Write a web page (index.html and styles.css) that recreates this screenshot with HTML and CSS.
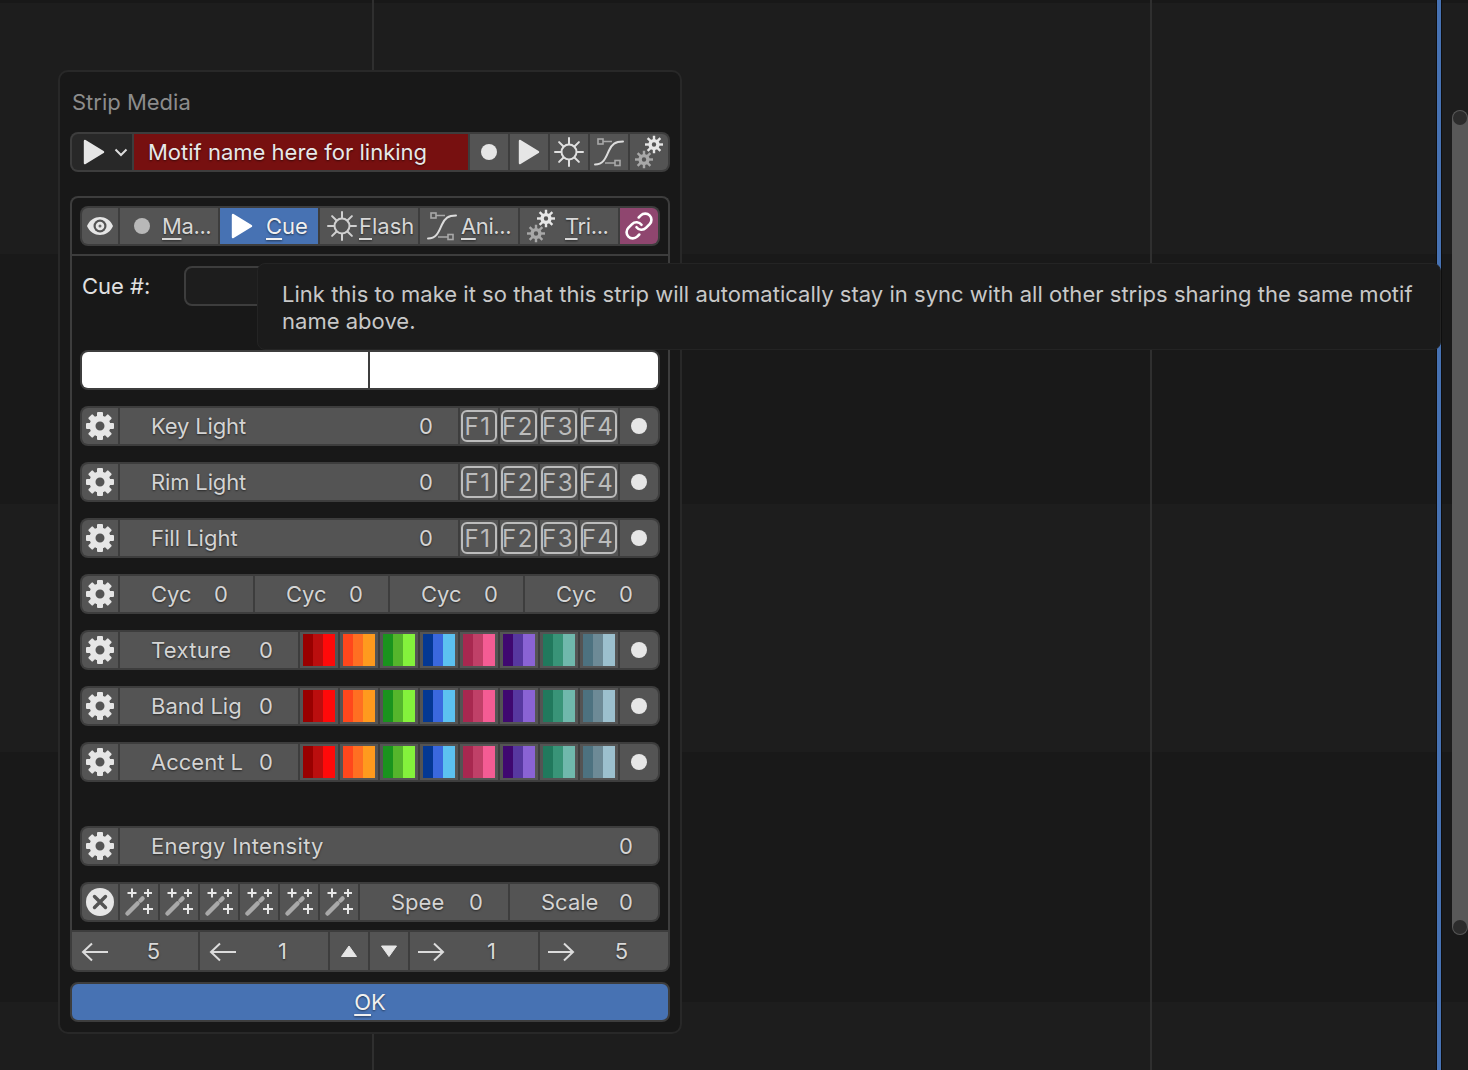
FILE: index.html
```html
<!DOCTYPE html>
<html lang="en">
<head>
<meta charset="utf-8">
<title>Strip Media</title>
<link rel="stylesheet" href="styles.css">
</head>
<body>
<svg class="defs" aria-hidden="true">
  <symbol id="gear" viewBox="0 0 30 30">
    <g fill="currentColor">
      <rect x="12" y="1" width="6" height="7" rx="1"/>
      <rect x="12" y="1" width="6" height="7" rx="1" transform="rotate(45 15 15)"/>
      <rect x="12" y="1" width="6" height="7" rx="1" transform="rotate(90 15 15)"/>
      <rect x="12" y="1" width="6" height="7" rx="1" transform="rotate(135 15 15)"/>
      <rect x="12" y="1" width="6" height="7" rx="1" transform="rotate(180 15 15)"/>
      <rect x="12" y="1" width="6" height="7" rx="1" transform="rotate(225 15 15)"/>
      <rect x="12" y="1" width="6" height="7" rx="1" transform="rotate(270 15 15)"/>
      <rect x="12" y="1" width="6" height="7" rx="1" transform="rotate(315 15 15)"/>
    </g>
    <circle cx="15" cy="15" r="7.5" fill="none" stroke="currentColor" stroke-width="6"/>
  </symbol>
  <symbol id="cog" viewBox="0 0 18 18">
    <g fill="currentColor">
      <rect x="7.800" y="0" width="2.400" height="5"/>
      <rect x="7.800" y="0" width="2.400" height="5" transform="rotate(45 9 9)"/>
      <rect x="7.800" y="0" width="2.400" height="5" transform="rotate(90 9 9)"/>
      <rect x="7.800" y="0" width="2.400" height="5" transform="rotate(135 9 9)"/>
      <rect x="7.800" y="0" width="2.400" height="5" transform="rotate(180 9 9)"/>
      <rect x="7.800" y="0" width="2.400" height="5" transform="rotate(225 9 9)"/>
      <rect x="7.800" y="0" width="2.400" height="5" transform="rotate(270 9 9)"/>
      <rect x="7.800" y="0" width="2.400" height="5" transform="rotate(315 9 9)"/>
    </g>
    <circle cx="9" cy="9" r="3.900" fill="none" stroke="currentColor" stroke-width="3.400"/>
  </symbol>
  <symbol id="gears" viewBox="0 0 38 36">
    <use href="#cog" x="15" y="1.500" width="18" height="18" color="#e6e6e6"/>
    <use href="#cog" x="5" y="16.500" width="18" height="18" color="#a8a8a8"/>
  </symbol>
  <symbol id="play" viewBox="0 0 22 26">
    <path d="M2 2 L20 13 L2 24 Z" fill="currentColor" stroke="currentColor" stroke-width="2.4" stroke-linejoin="round"/>
  </symbol>
  <symbol id="sun" viewBox="0 0 30 30">
    <circle cx="15" cy="15" r="7.5" fill="none" stroke="currentColor" stroke-width="2"/>
    <path d="M15 1v6M15 23v6M1 15h6M23 15h6M5.1 5.1l4.2 4.2M20.7 20.7l4.2 4.2M24.9 5.1l-4.2 4.2M9.3 20.7l-4.2 4.2" stroke="currentColor" stroke-width="2" stroke-linecap="round"/>
  </symbol>
  <symbol id="curve" viewBox="0 0 32 32">
    <g fill="none" stroke="#a8a8a8" stroke-width="1.6">
      <rect x="5" y="3" width="5" height="5"/>
      <path d="M10 5.5H19M12 27H22"/>
      <rect x="22" y="24.500" width="5" height="5"/>
    </g>
    <path d="M2 28.500C11 28.500 13 21 16 14.500S22 5.500 30 5.500" fill="none" stroke="currentColor" stroke-width="2" stroke-linecap="round"/>
  </symbol>
  <symbol id="eye" viewBox="0 0 28 20">
    <path d="M1 10C6 -2 22 -2 27 10C22 22 6 22 1 10Z" fill="#e6e6e6"/>
    <circle cx="14" cy="10" r="6.500" fill="#545454"/>
    <circle cx="14" cy="10" r="4.300" fill="#e6e6e6"/>
    <circle cx="14" cy="10" r="1.500" fill="#6a6a6a"/>
  </symbol>
  <symbol id="link" viewBox="0 0 24 24">
    <path d="M10 13a5 5 0 0 0 7.540.54l3-3a5 5 0 0 0-7.070-7.070l-1.720 1.710M14 11a5 5 0 0 0-7.540-.54l-3 3a5 5 0 0 0 7.070 7.070l1.710-1.710" fill="none" stroke="currentColor" stroke-width="2.100" stroke-linecap="round" stroke-linejoin="round"/>
  </symbol>
  <symbol id="wand" viewBox="0 0 38 36">
    <path d="M12 4.500v9M7.500 9h9M28 5v8M24 9h8M28 20v10M23 25h10" stroke="#e6e6e6" stroke-width="2"/>
    <path d="M7.500 29.500L17.500 19.500" stroke="#a8a8a8" stroke-width="4.500" stroke-linecap="round"/>
    <path d="M20.500 16.500L22.500 14.500" stroke="#a8a8a8" stroke-width="4.500" stroke-linecap="round"/>
  </symbol>
  <symbol id="xc" viewBox="0 0 30 30">
    <circle cx="15" cy="15" r="14" fill="#e6e6e6"/>
    <path d="M9.500 9.500l11 11M20.500 9.500l-11 11" stroke="#545454" stroke-width="3.400" stroke-linecap="round"/>
  </symbol>
  <symbol id="left" viewBox="0 0 28 20">
    <path d="M27 10H2M11 1.500L2 10l9 8.500" fill="none" stroke="currentColor" stroke-width="2"/>
  </symbol>
  <symbol id="right" viewBox="0 0 28 20">
    <path d="M1 10H26M17 1.500L26 10l-9 8.500" fill="none" stroke="currentColor" stroke-width="2"/>
  </symbol>
  <symbol id="tri-up" viewBox="0 0 18 14">
    <path d="M9 2L16.500 12.500H1.500Z" fill="currentColor" stroke="currentColor" stroke-width="1" stroke-linejoin="round"/>
  </symbol>
  <symbol id="tri-down" viewBox="0 0 18 14">
    <path d="M9 12.500L16.500 2H1.500Z" fill="currentColor" stroke="currentColor" stroke-width="1" stroke-linejoin="round"/>
  </symbol>
</svg>

<main class="timeline">
  <div class="band band-top"></div>
  <div class="band band-1"></div>
  <div class="band band-2"></div>
  <div class="band band-3"></div>
  <div class="band band-4"></div>
  <div class="band band-last"></div>
  <div class="vline vline-1"></div>
  <div class="vline vline-2"></div>
  <div class="playhead"></div>
  <div class="scrollthumb"><span class="knob"></span><span class="knob"></span></div>

  <section class="dialog">
    <h1 class="title">Strip Media</h1>

    <div class="wrow top-row">
      <div class="cell dark type-cell"><svg class="i-play"><use href="#play"/></svg><svg class="i-chev" viewBox="0 0 14 9"><path d="M1.500 1.500L7 7l5.500-5.500" fill="none" stroke="currentColor" stroke-width="2"/></svg></div>
      <div class="cell motif">Motif name here for linking</div>
      <div class="cell w38"><span class="dot"></span></div>
      <div class="cell w38"><svg class="i-play"><use href="#play"/></svg></div>
      <div class="cell w38"><svg class="i-sun"><use href="#sun"/></svg></div>
      <div class="cell w38"><svg class="i-curve"><use href="#curve"/></svg></div>
      <div class="cell w38"><svg class="i-cell"><use href="#gears"/></svg></div>
    </div>

    <div class="box">
      <div class="wrow tabs">
        <div class="cell w36"><svg class="i-eye"><use href="#eye"/></svg></div>
        <div class="cell tab"><span class="dot dim tab-dot"></span><span class="tight"><u>M</u>a...</span></div>
        <div class="cell tab active"><svg class="i-play tab-play"><use href="#play"/></svg><span class="tab-l2"><u>C</u>ue</span></div>
        <div class="cell tab"><svg class="i-sun tab-sun"><use href="#sun"/></svg><span><u>F</u>lash</span></div>
        <div class="cell tab"><svg class="i-curve tab-curve"><use href="#curve"/></svg><span class="tight"><u>A</u>ni...</span></div>
        <div class="cell tab"><svg class="i-cell tab-gears"><use href="#gears"/></svg><span class="tight"><u>T</u>ri...</span></div>
        <div class="cell w38 linked"><svg class="i-link"><use href="#link"/></svg></div>
      </div>

      <div class="divider"></div>

      <div class="cue-row">
        <span class="cue-label">Cue #:</span>
        <div class="cue-field"></div>
      </div>

      <div class="wrow color-bar">
        <div class="white white-a"></div>
        <div class="white white-b"></div>
      </div>

      <div class="stack">
        <div class="wrow">
          <div class="cell w36"><svg class="i-gear"><use href="#gear"/></svg></div>
          <div class="cell num"><span class="lbl-narrow">Key Light</span><span>0</span></div>
          <div class="cell w38"><span class="fkey">F1</span></div>
          <div class="cell w38"><span class="fkey">F2</span></div>
          <div class="cell w38"><span class="fkey">F3</span></div>
          <div class="cell w38"><span class="fkey">F4</span></div>
          <div class="cell w38"><span class="dot"></span></div>
        </div>
        <div class="wrow">
          <div class="cell w36"><svg class="i-gear"><use href="#gear"/></svg></div>
          <div class="cell num"><span class="lbl-narrow">Rim Light</span><span>0</span></div>
          <div class="cell w38"><span class="fkey">F1</span></div>
          <div class="cell w38"><span class="fkey">F2</span></div>
          <div class="cell w38"><span class="fkey">F3</span></div>
          <div class="cell w38"><span class="fkey">F4</span></div>
          <div class="cell w38"><span class="dot"></span></div>
        </div>
        <div class="wrow">
          <div class="cell w36"><svg class="i-gear"><use href="#gear"/></svg></div>
          <div class="cell num"><span>Fill Light</span><span>0</span></div>
          <div class="cell w38"><span class="fkey">F1</span></div>
          <div class="cell w38"><span class="fkey">F2</span></div>
          <div class="cell w38"><span class="fkey">F3</span></div>
          <div class="cell w38"><span class="fkey">F4</span></div>
          <div class="cell w38"><span class="dot"></span></div>
        </div>
        <div class="wrow">
          <div class="cell w36"><svg class="i-gear"><use href="#gear"/></svg></div>
          <div class="cell num"><span>Cyc</span><span>0</span></div>
          <div class="cell num"><span>Cyc</span><span>0</span></div>
          <div class="cell num"><span>Cyc</span><span>0</span></div>
          <div class="cell num"><span>Cyc</span><span>0</span></div>
        </div>
        <div class="wrow">
          <div class="cell w36"><svg class="i-gear"><use href="#gear"/></svg></div>
          <div class="cell num"><span class="lbl-wide">Texture</span><span>0</span></div>
          <div class="cell w38"><span class="sw sw-red"></span></div>
          <div class="cell w38"><span class="sw sw-orange"></span></div>
          <div class="cell w38"><span class="sw sw-green"></span></div>
          <div class="cell w38"><span class="sw sw-blue"></span></div>
          <div class="cell w38"><span class="sw sw-pink"></span></div>
          <div class="cell w38"><span class="sw sw-purple"></span></div>
          <div class="cell w38"><span class="sw sw-teal"></span></div>
          <div class="cell w38"><span class="sw sw-slate"></span></div>
          <div class="cell w38"><span class="dot"></span></div>
        </div>
        <div class="wrow">
          <div class="cell w36"><svg class="i-gear"><use href="#gear"/></svg></div>
          <div class="cell num"><span>Band Lig</span><span>0</span></div>
          <div class="cell w38"><span class="sw sw-red"></span></div>
          <div class="cell w38"><span class="sw sw-orange"></span></div>
          <div class="cell w38"><span class="sw sw-green"></span></div>
          <div class="cell w38"><span class="sw sw-blue"></span></div>
          <div class="cell w38"><span class="sw sw-pink"></span></div>
          <div class="cell w38"><span class="sw sw-purple"></span></div>
          <div class="cell w38"><span class="sw sw-teal"></span></div>
          <div class="cell w38"><span class="sw sw-slate"></span></div>
          <div class="cell w38"><span class="dot"></span></div>
        </div>
        <div class="wrow">
          <div class="cell w36"><svg class="i-gear"><use href="#gear"/></svg></div>
          <div class="cell num"><span>Accent L</span><span>0</span></div>
          <div class="cell w38"><span class="sw sw-red"></span></div>
          <div class="cell w38"><span class="sw sw-orange"></span></div>
          <div class="cell w38"><span class="sw sw-green"></span></div>
          <div class="cell w38"><span class="sw sw-blue"></span></div>
          <div class="cell w38"><span class="sw sw-pink"></span></div>
          <div class="cell w38"><span class="sw sw-purple"></span></div>
          <div class="cell w38"><span class="sw sw-teal"></span></div>
          <div class="cell w38"><span class="sw sw-slate"></span></div>
          <div class="cell w38"><span class="dot"></span></div>
        </div>
      </div>

      <div class="stack lower">
        <div class="wrow">
          <div class="cell w36"><svg class="i-gear"><use href="#gear"/></svg></div>
          <div class="cell num"><span class="lbl-wide">Energy Intensity</span><span>0</span></div>
        </div>
        <div class="wrow">
          <div class="cell w36"><svg class="i-gear"><use href="#xc"/></svg></div>
          <div class="cell w38"><svg class="i-cell"><use href="#wand"/></svg></div>
          <div class="cell w38"><svg class="i-cell"><use href="#wand"/></svg></div>
          <div class="cell w38"><svg class="i-cell"><use href="#wand"/></svg></div>
          <div class="cell w38"><svg class="i-cell"><use href="#wand"/></svg></div>
          <div class="cell w38"><svg class="i-cell"><use href="#wand"/></svg></div>
          <div class="cell w38"><svg class="i-cell"><use href="#wand"/></svg></div>
          <div class="cell num"><span>Spee</span><span>0</span></div>
          <div class="cell num"><span>Scale</span><span>0</span></div>
        </div>
      </div>
    </div>

    <div class="wrow nudge">
      <div class="cell step step-w126"><svg class="i-arrow"><use href="#left"/></svg><span class="step-val">5</span></div>
      <div class="cell step"><svg class="i-arrow"><use href="#left"/></svg><span class="step-val">1</span></div>
      <div class="cell w38"><svg class="i-tri"><use href="#tri-up"/></svg></div>
      <div class="cell w38"><svg class="i-tri"><use href="#tri-down"/></svg></div>
      <div class="cell step step-r"><svg class="i-arrow"><use href="#right"/></svg><span class="step-val">1</span></div>
      <div class="cell step step-r"><svg class="i-arrow"><use href="#right"/></svg><span class="step-val">5</span></div>
    </div>

    <button class="ok" type="button"><u>O</u>K</button>
  </section>

  <div class="tooltip">Link this to make it so that this strip will automatically stay in sync with all other strips sharing the same motif name above.</div>
</main>
</body>
</html>
```

FILE: styles.css
```css
* { box-sizing: border-box; }
html, body { margin: 0; height: 100%; background: #1c1c1c; }
body { overflow: hidden; font-family: Inter, "Noto Sans", sans-serif; font-size: 22px; color: #dcdcdc; }
.defs { position: absolute; width: 0; height: 0; overflow: hidden; }

.timeline { position: relative; width: 1468px; height: 1070px; display: flex; flex-direction: column; overflow: hidden; }
.band-top { height: 3px; background: #181818; }
.band-1 { height: 251px; background: #1d1d1d; }
.band-2 { height: 250px; background: #191919; }
.band-3 { height: 248px; background: #1d1d1d; }
.band-4 { height: 250px; background: #191919; }
.band-last { flex: 1; background: #1d1d1d; }

.vline { position: absolute; top: 0; bottom: 0; width: 2px; background: #2f2f2f; }
.vline-1 { left: 372px; }
.vline-2 { left: 1150px; }
.playhead { position: absolute; top: 0; bottom: 0; left: 1436px; width: 6px; background: #4772b3; border-left: 1px solid #0e0e0e; border-right: 1px solid #0e0e0e; }
.scrollthumb { position: absolute; left: 1452px; top: 110px; width: 16px; height: 825px; padding: 1px 0; background: #585858; border-radius: 8px; display: flex; flex-direction: column; justify-content: space-between; align-items: center; }
.knob { width: 14px; height: 14px; border-radius: 50%; background: #2c2c2c; }

.dialog { position: absolute; left: 58px; top: 70px; width: 624px; height: 964px; padding: 15px 10px 10px; background: #181818; border: 2px solid #282828; border-radius: 10px; }
.title { margin: 0 0 15px 2px; height: 30px; line-height: 30px; font-size: 22px; font-weight: 400; color: #8c8c8c; }

.wrow { display: flex; gap: 2px; height: 40px; padding: 2px; background: #3d3d3d; border-radius: 8px; }
.cell { display: flex; align-items: center; justify-content: center; flex: none; background: #545454; text-shadow: 0 1px 2px rgba(0,0,0,.55); }
.cell:first-child { border-radius: 6px 0 0 6px; }
.cell:last-child { border-radius: 0 6px 6px 0; }
.w36 { width: 36px; }
.w38 { width: 38px; }

.dark { background: #282828; }
.type-cell { width: 60px; gap: 9px; padding-left: 11px; justify-content: flex-start; }
.motif { flex: 1; justify-content: flex-start; padding-left: 14px; background: #771010; color: #e8e8e8; }

.dot { width: 16px; height: 16px; border-radius: 50%; background: #e6e6e6; }
.dot.dim { background: #b8b8b8; }
.i-play { flex: none; width: 22px; height: 26px; color: #e6e6e6; }
.i-chev { flex: none; width: 14px; height: 9px; color: #dcdcdc; }
.i-sun { flex: none; width: 30px; height: 30px; color: #e0e0e0; }
.i-curve { flex: none; width: 32px; height: 32px; color: #dcdcdc; }
.i-cell { flex: none; width: 38px; height: 36px; }
.i-gear { width: 30px; height: 30px; color: #e6e6e6; }
.i-eye { width: 28px; height: 20px; margin-bottom: 1px; }
.i-link { width: 30px; height: 30px; color: #fff; }
.i-arrow { flex: none; width: 28px; height: 20px; margin-top: 1px; color: #dcdcdc; }
.i-tri { width: 18px; height: 14px; color: #e6e6e6; }

.box { margin-top: 24px; padding: 8px 8px 8px; height: 734px; border: 2px solid #3d3d3d; border-bottom: 0; border-radius: 8px 8px 0 0; }
.divider { height: 2px; margin: 8px -8px 10px; background: #3d3d3d; }
.tab { flex: none; width: 98px; justify-content: flex-start; color: #d8d8d8; white-space: nowrap; }
.tab u, .ok u { text-decoration-thickness: 2px; text-underline-offset: 4px; }
.tab.active { background: #4772b3; color: #fff; }
.tab.active .i-play { color: #fff; }
.linked { background: #8f466f; }
.tight { letter-spacing: -.4px; }
.tab-dot { margin: 0 12px 0 14px; }
.tab-play { margin: 0 13px 0 11px; }
.tab-l2 { color: #f0f0f0; }
.tab-sun { margin: 0 2px 0 7px; color: #d0d0d0; }
.tab-curve { margin: 0 3px 0 6px; }
.tab-gears { margin: 0 5px 0 2px; }

.cue-row { display: flex; align-items: flex-start; height: 84px; }
.cue-label { width: 104px; padding-left: 2px; line-height: 40px; color: #e0e0e0; }
.cue-field { flex: 1; height: 40px; background: #1d1d1d; border: 2px solid #3d3d3d; border-radius: 8px; }

.color-bar .white { background: #fff; }
.white-a { width: 286px; flex: none; border-radius: 6px 0 0 6px; }
.white-b { flex: 1; border-radius: 0 6px 6px 0; }

.stack { display: flex; flex-direction: column; gap: 16px; margin-top: 16px; }
.stack.lower { margin-top: 44px; }
.num { flex: 1 1 0; min-width: 0; justify-content: space-between; padding: 0 25px 0 31px; color: #d4d4d4; white-space: nowrap; }
.lbl-narrow { letter-spacing: -.15px; }
.lbl-wide { letter-spacing: .32px; }

.fkey { display: flex; align-items: center; justify-content: center; width: 36px; height: 32px; padding-right: 2px; border: 2px solid #bcbcbc; border-radius: 6px; font-size: 24px; letter-spacing: 1.5px; color: #bcbcbc; text-shadow: none; }

.sw { width: 32px; height: 32px; }
.sw-red { background: linear-gradient(90deg, #990000 10px, #bb0e0e 10px 20px, #ff0a0a 20px); }
.sw-orange { background: linear-gradient(90deg, #ff471c 10px, #ff6f22 10px 20px, #ff9a1e 20px); }
.sw-green { background: linear-gradient(90deg, #1a931e 10px, #55b52c 10px 20px, #84f23c 20px); }
.sw-blue { background: linear-gradient(90deg, #043893 10px, #3a68de 10px 20px, #5cc1f0 20px); }
.sw-pink { background: linear-gradient(90deg, #a82850 10px, #c04068 10px 20px, #f45c94 20px); }
.sw-purple { background: linear-gradient(90deg, #3f0870 10px, #5738a0 10px 20px, #8a63d4 20px); }
.sw-teal { background: linear-gradient(90deg, #21795d 10px, #399478 10px 20px, #70b8ac 20px); }
.sw-slate { background: linear-gradient(90deg, #4d7280 10px, #6d8a96 10px 20px, #9cc0ce 20px); }

.nudge { height: 42px; border-radius: 0 0 8px 8px; }
.nudge .cell:first-child { border-radius: 0 0 0 6px; }
.nudge .cell:last-child { border-radius: 0 0 6px 0; }
.step { width: 128px; justify-content: flex-start; padding-left: 9px; color: #d8d8d8; }
.step-w126 { width: 126px; }
.step-r { padding-left: 7px; }
.step-val { flex: 1; text-align: center; }

.ok { display: block; width: 100%; height: 40px; margin-top: 10px; padding: 0; background: #4772b3; border: 2px solid #3d3d3d; border-radius: 8px; font: inherit; color: #f0f0f0; text-shadow: 0 1px 2px rgba(0,0,0,.5); }

.tooltip { position: absolute; left: 257px; top: 263px; width: 1184px; height: 87px; padding: 17px 24px 0; background: #1b1b1b; border: 1px solid #242424; border-radius: 8px; line-height: 27px; letter-spacing: .02px; color: #c8c8c8; }
```
